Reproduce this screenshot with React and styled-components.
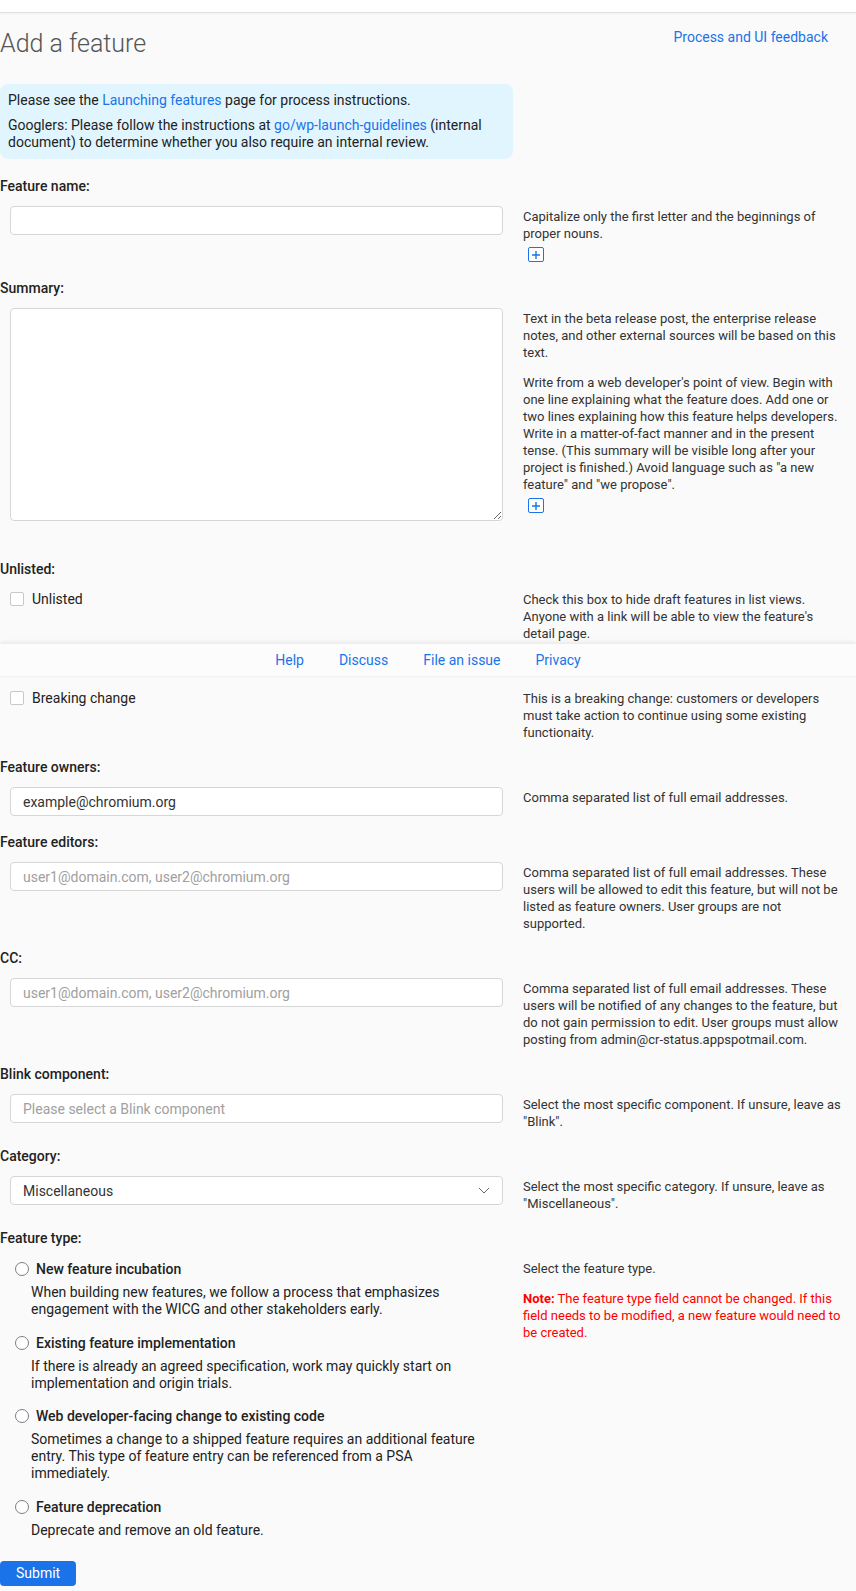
import React from 'react';
import styled, { createGlobalStyle } from 'styled-components';

const GlobalStyle = createGlobalStyle`
  html, body {
    margin: 0;
    padding: 0;
    background: #fafafa;
  }
  body {
    font-family: Roboto, "Noto Sans", sans-serif;
    font-size: 14px;
    color: #222;
  }
  * {
    box-sizing: border-box;
  }
`;

const Page = styled.div`
  position: relative;
  min-height: 1591px;
  background: #fafafa;
`;

const TopBar = styled.div`
  height: 13px;
  background: #fff;
  border-bottom: 1px solid #dedede;
  box-shadow: 0 1px 2px rgba(0, 0, 0, 0.04);
`;

const Main = styled.main`
  padding-top: 14px;
`;

const Header = styled.div`
  display: flex;
  justify-content: space-between;
  align-items: flex-start;
  padding-right: 28px;
`;

const Title = styled.h1`
  margin: 0;
  padding-top: 1px;
  font-size: 25px;
  line-height: 31px;
  font-weight: 300;
  color: #555;
`;

const Link = styled.a`
  color: #1a73e8;
  text-decoration: none;
  cursor: pointer;
`;

const FeedbackLink = styled(Link)`
  font-size: 14px;
  line-height: 20px;
`;

const InfoBox = styled.div`
  width: 513px;
  margin-top: 25px;
  padding: 8px;
  background: #e1f5fe;
  border-radius: 8px;
  font-size: 14px;
  line-height: 17px;
  color: #222;

  p {
    margin: 0;
  }
  p + p {
    margin-top: 8px;
  }
`;

const Form = styled.form`
  margin-top: 17px;
`;

const Field = styled.section`
  margin-bottom: 16px;
`;

const Label = styled.div`
  font-size: 14px;
  line-height: 20px;
  font-weight: 500;
  color: #222;
  margin-bottom: 10px;
`;

const Row = styled.div`
  display: grid;
  grid-template-columns: 513px 1fr;
  column-gap: 10px;
  align-items: start;
`;

const InputCell = styled.div`
  padding: 0 10px;
`;

const TextInput = styled.input`
  display: block;
  width: 100%;
  height: 29px;
  padding: 0 12px;
  border: 1px solid #d6d6d6;
  border-radius: 4px;
  background: #fff;
  font-family: Roboto, sans-serif;
  font-size: 14px;
  color: #333;
  outline: none;

  &::placeholder {
    color: #a0a0a0;
  }
`;

const TextArea = styled.textarea`
  display: block;
  width: 100%;
  height: 213px;
  margin-bottom: 22px;
  padding: 6px 12px;
  border: 1px solid #d6d6d6;
  border-radius: 4px;
  background: #fff;
  font-family: Roboto, sans-serif;
  font-size: 14px;
  resize: vertical;
  outline: none;
`;

const SelectBox = styled.div`
  display: flex;
  align-items: center;
  justify-content: space-between;
  height: 29px;
  padding: 0 12px;
  border: 1px solid #d6d6d6;
  border-radius: 4px;
  background: #fff;
  font-size: 14px;
  color: #333;
`;

const Help = styled.div`
  padding: 2px 12px 0 0;
  font-size: 13px;
  line-height: 17px;
  color: #333;

  p {
    margin: 0;
  }
  p + p {
    margin-top: 13px;
  }
`;

const Note = styled.p`
  color: #f00;

  b {
    font-weight: 700;
  }
`;

const ExpandButton = styled.span`
  display: flex;
  align-items: center;
  justify-content: center;
  width: 16px;
  height: 15px;
  margin: 5px 0 0 5px;
  border: 1px solid #1a73e8;
  border-radius: 2px;
  background: #fff;
`;

const CheckRow = styled.label`
  display: flex;
  align-items: center;
  gap: 8px;
  padding-left: 10px;
  font-size: 14px;
  line-height: 20px;
  color: #222;
`;

const CheckBox = styled.span`
  width: 14px;
  height: 14px;
  border: 1px solid #c8c8c8;
  border-radius: 2px;
  background: #fff;
`;

const RadioList = styled.div`
  padding: 1px 30px 0 0;
`;

const RadioItem = styled.div`
  & + & {
    margin-top: 14.5px;
  }
`;

const RadioTitle = styled.label`
  display: flex;
  align-items: center;
  gap: 7px;
  padding-left: 15px;
  font-size: 14px;
  line-height: 20px;
  font-weight: 500;
  color: #222;
`;

const RadioCircle = styled.span`
  width: 14px;
  height: 14px;
  border: 1.5px solid #7d7d85;
  border-radius: 50%;
  background: #fff;
`;

const RadioDesc = styled.div`
  margin: 5px 0 0 31px;
  font-size: 14px;
  line-height: 17px;
  color: #222;
`;

const SubmitButton = styled.button`
  display: block;
  margin-top: 22px;
  height: 25px;
  padding: 0 16px;
  border: none;
  border-radius: 4px;
  background: #1a73e8;
  color: #fff;
  font-family: Roboto, sans-serif;
  font-size: 14px;
  cursor: pointer;
`;

const Footer = styled.footer`
  position: absolute;
  top: 644px;
  left: 0;
  right: 0;
  height: 33px;
  display: flex;
  align-items: center;
  justify-content: center;
  gap: 35px;
  background: #fcfcfc;
  border-bottom: 1px solid #f1f1f1;
  box-shadow: 0 -2px 4px rgba(0, 0, 0, 0.07);
  font-size: 14px;
  z-index: 2;
`;

const PlusIcon = () => (
  <svg width="10" height="10" viewBox="0 0 10 10">
    <path d="M5 1v8M1 5h8" stroke="#1a73e8" strokeWidth="1.4" fill="none" />
  </svg>
);

const Chevron = () => (
  <svg width="12" height="7" viewBox="0 0 12 7">
    <polyline points="1,1 6,6 11,1" stroke="#666" strokeWidth="1" fill="none" />
  </svg>
);

const radios = [
  {
    title: 'New feature incubation',
    desc: 'When building new features, we follow a process that emphasizes engagement with the WICG and other stakeholders early.',
  },
  {
    title: 'Existing feature implementation',
    desc: 'If there is already an agreed specification, work may quickly start on implementation and origin trials.',
  },
  {
    title: 'Web developer-facing change to existing code',
    desc: 'Sometimes a change to a shipped feature requires an additional feature entry. This type of feature entry can be referenced from a PSA immediately.',
  },
  {
    title: 'Feature deprecation',
    desc: 'Deprecate and remove an old feature.',
  },
];

const emailFields = [
  {
    label: 'Feature editors:',
    help: 'Comma separated list of full email addresses. These users will be allowed to edit this feature, but will not be listed as feature owners. User groups are not supported.',
  },
  {
    label: 'CC:',
    help: 'Comma separated list of full email addresses. These users will be notified of any changes to the feature, but do not gain permission to edit. User groups must allow posting from admin@cr-status.appspotmail.com.',
  },
];

const App = () => {
  return (
    <Page>
      <GlobalStyle />
      <TopBar />
      <Main>
        <Header>
          <Title>Add a feature</Title>
          <FeedbackLink>Process and UI feedback</FeedbackLink>
        </Header>

        <InfoBox>
          <p>
            Please see the <Link>Launching features</Link> page for process instructions.
          </p>
          <p>
            Googlers: Please follow the instructions at <Link>go/wp-launch-guidelines</Link> (internal
            document) to determine whether you also require an internal review.
          </p>
        </InfoBox>

        <Form onSubmit={(e) => e.preventDefault()}>
          <Field>
            <Label>Feature name:</Label>
            <Row>
              <InputCell>
                <TextInput type="text" />
              </InputCell>
              <Help>
                <p>Capitalize only the first letter and the beginnings of proper nouns.</p>
                <ExpandButton>
                  <PlusIcon />
                </ExpandButton>
              </Help>
            </Row>
          </Field>

          <Field>
            <Label>Summary:</Label>
            <Row>
              <InputCell>
                <TextArea />
              </InputCell>
              <Help>
                <p>
                  Text in the beta release post, the enterprise release notes, and other external
                  sources will be based on this text.
                </p>
                <p>
                  Write from a web developer's point of view. Begin with one line explaining what the
                  feature does. Add one or two lines explaining how this feature helps developers.
                  Write in a matter-of-fact manner and in the present tense. (This summary will be
                  visible long after your project is finished.) Avoid language such as "a new
                  feature" and "we propose".
                </p>
                <ExpandButton>
                  <PlusIcon />
                </ExpandButton>
              </Help>
            </Row>
          </Field>

          <Field>
            <Label>Unlisted:</Label>
            <Row>
              <CheckRow>
                <CheckBox />
                Unlisted
              </CheckRow>
              <Help>
                <p>
                  Check this box to hide draft features in list views. Anyone with a link will be
                  able to view the feature's detail page.
                </p>
              </Help>
            </Row>
          </Field>

          <Field>
            <Label>Breaking change:</Label>
            <Row>
              <CheckRow>
                <CheckBox />
                Breaking change
              </CheckRow>
              <Help>
                <p>
                  This is a breaking change: customers or developers must take action to continue
                  using some existing functionaity.
                </p>
              </Help>
            </Row>
          </Field>

          <Field>
            <Label>Feature owners:</Label>
            <Row>
              <InputCell>
                <TextInput type="text" defaultValue="example@chromium.org" />
              </InputCell>
              <Help>
                <p>Comma separated list of full email addresses.</p>
              </Help>
            </Row>
          </Field>

          {emailFields.map((f) => (
            <Field key={f.label}>
              <Label>{f.label}</Label>
              <Row>
                <InputCell>
                  <TextInput type="text" placeholder="user1@domain.com, user2@chromium.org" />
                </InputCell>
                <Help>
                  <p>{f.help}</p>
                </Help>
              </Row>
            </Field>
          ))}

          <Field>
            <Label>Blink component:</Label>
            <Row>
              <InputCell>
                <TextInput type="text" placeholder="Please select a Blink component" />
              </InputCell>
              <Help>
                <p>Select the most specific component. If unsure, leave as "Blink".</p>
              </Help>
            </Row>
          </Field>

          <Field>
            <Label>Category:</Label>
            <Row>
              <InputCell>
                <SelectBox>
                  Miscellaneous
                  <Chevron />
                </SelectBox>
              </InputCell>
              <Help>
                <p>Select the most specific category. If unsure, leave as "Miscellaneous".</p>
              </Help>
            </Row>
          </Field>

          <Field>
            <Label>Feature type:</Label>
            <Row>
              <RadioList>
                {radios.map((r) => (
                  <RadioItem key={r.title}>
                    <RadioTitle>
                      <RadioCircle />
                      {r.title}
                    </RadioTitle>
                    <RadioDesc>{r.desc}</RadioDesc>
                  </RadioItem>
                ))}
              </RadioList>
              <Help>
                <p>Select the feature type.</p>
                <Note>
                  <b>Note:</b> The feature type field cannot be changed. If this field needs to be
                  modified, a new feature would need to be created.
                </Note>
              </Help>
            </Row>
          </Field>

          <SubmitButton type="submit">Submit</SubmitButton>
        </Form>
      </Main>

      <Footer>
        <Link>Help</Link>
        <Link>Discuss</Link>
        <Link>File an issue</Link>
        <Link>Privacy</Link>
      </Footer>
    </Page>
  );
};

export default App;
